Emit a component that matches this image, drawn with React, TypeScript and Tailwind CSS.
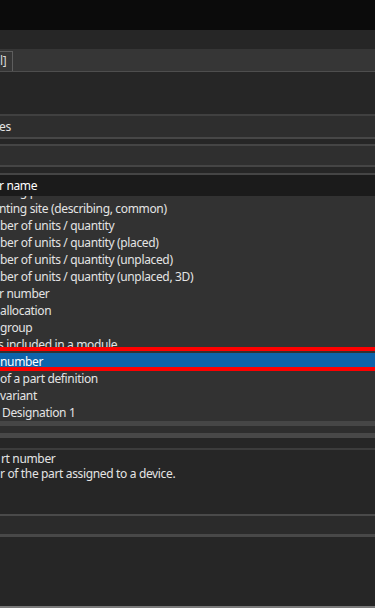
import React from "react";

const rows: { t: string; ml: number; sel?: boolean }[] = [
  { t: "nting position", ml: -1 },
  { t: "nting site (describing, common)", ml: -1 },
  { t: "ber of units / quantity", ml: 0 },
  { t: "ber of units / quantity (placed)", ml: 0 },
  { t: "ber of units / quantity (unplaced)", ml: 0 },
  { t: "ber of units / quantity (unplaced, 3D)", ml: 0 },
  { t: "r number", ml: -1 },
  { t: "allocation", ml: 0 },
  { t: "group", ml: 0 },
  { t: "s included in a module", ml: -2 },
  { t: "number", ml: 0, sel: true },
  { t: "of a part definition", ml: 0 },
  { t: "variant", ml: 0 },
  { t: "Designation 1", ml: 2 },
];

export default function App() {
  return (
    <div className="w-[375px] h-[608px] overflow-hidden bg-[#262626] flex flex-col font-['Noto_Sans',sans-serif] text-[12px] tracking-[-0.35px] text-[#e4e4e4]">
      <div className="h-[30px] shrink-0 bg-[#0b0b0b]" />
      <div className="h-[19px] shrink-0 bg-[#262626]" />
      <div className="h-[23px] shrink-0 bg-[#363636] flex flex-col">
        <div className="h-[2px]" />
        <div className="h-[20px] flex">
          <div className="w-[13px] h-[20px] border-t border-r border-[#5e5e5e] leading-[18px] pl-[0px] text-[#d8d8d8] whitespace-nowrap overflow-hidden">
            l]
          </div>
        </div>
        <div className="h-[1px] bg-[#4e4e4e]" />
      </div>
      <div className="h-[42px] shrink-0 bg-[#262626]" />
      <div className="h-[2px] shrink-0 bg-[#404040]" />
      <div className="h-[21px] shrink-0 bg-[#2e2e2e] leading-[21px] overflow-hidden whitespace-nowrap">
        <span className="ml-[-1px] inline-block">es</span>
      </div>
      <div className="h-[2px] shrink-0 bg-[#474747]" />
      <div className="h-[5px] shrink-0 bg-[#262626]" />
      <div className="h-[2px] shrink-0 bg-[#454545]" />
      <div className="h-[19px] shrink-0 bg-[#2f2f2f]" />
      <div className="h-[2px] shrink-0 bg-[#454545]" />
      <div className="h-[6px] shrink-0 bg-[#262626]" />
      <div className="h-[2px] shrink-0 bg-[#454545]" />
      <div className="h-[21px] shrink-0 bg-[#1b1b1b] leading-[21px] text-white overflow-hidden whitespace-nowrap">
        <span className="ml-[-1px] inline-block">r name</span>
      </div>
      <div className="h-[225px] shrink-0 bg-[#323232] overflow-hidden relative">
        <div className="mt-[-13px] flex flex-col">
          {rows.map((r, i) => (
            <div
              key={i}
              className={
                r.sel
                  ? "h-[17px] leading-[17px] whitespace-nowrap bg-[#0e63aa] text-white"
                  : "h-[17px] leading-[17px] whitespace-nowrap"
              }
            >
              <span className="inline-block" style={{ marginLeft: r.ml }}>
                {r.t}
              </span>
            </div>
          ))}
        </div>
        <div className="absolute left-0 right-0 top-[151px] h-[4px] bg-[#fe0000]" />
        <div className="absolute left-0 right-0 top-[171px] h-[4px] bg-[#fe0000]" />
      </div>
      <div className="h-[5px] shrink-0 bg-[#464646]" />
      <div className="h-[7px] shrink-0 bg-[#2e2e2e]" />
      <div className="h-[5px] shrink-0 bg-[#484848]" />
      <div className="h-[10px] shrink-0 bg-[#262626]" />
      <div className="h-[2px] shrink-0 bg-[#3c3c3c]" />
      <div className="h-[64px] shrink-0 bg-[#262626] pt-[1px] leading-[15px] whitespace-nowrap overflow-hidden">
        <div className="ml-[1px]">rt number</div>
        <div>r of the part assigned to a device.</div>
      </div>
      <div className="h-[2px] shrink-0 bg-[#4a4a4a]" />
      <div className="h-[18px] shrink-0 bg-[#2b2b2b]" />
      <div className="h-[3px] shrink-0 bg-[#484848]" />
      <div className="h-[69px] shrink-0 bg-[#262626]" />
      <div className="h-[2px] shrink-0 bg-[#7a7a7a]" />
    </div>
  );
}
